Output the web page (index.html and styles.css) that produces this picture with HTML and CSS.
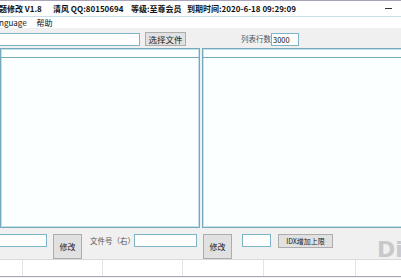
FILE: index.html
```html
<!DOCTYPE html>
<html>
<head>
<meta charset="utf-8">
<link rel="stylesheet" href="styles.css">
</head>
<body>
<div class="win">
  <div class="titlebar">
    <span class="t t1">题修改 V1.8</span>
    <span class="t t2">清风 QQ:80150694</span>
    <span class="t t3">等级:至尊会员</span>
    <span class="t t4">到期时间:2020-6-18 09:29:09</span>
    <span class="minbtn"></span>
  </div>
  <div class="menubar">
    <span class="menu m1">nguage</span>
    <span class="menu m2">帮助</span>
  </div>
  <div class="content">
    <div class="row1">
      <div class="input path"></div>
      <div class="btn choose">选择文件</div>
      <span class="lbl rows">列表行数</span>
      <div class="input num">3000</div>
    </div>
    <div class="lists">
      <div class="list left"><div class="lhead"></div></div>
      <div class="list right"><div class="lhead"></div></div>
    </div>
    <div class="row2">
      <div class="input b1"></div>
      <div class="btn tall edit1">修改</div>
      <span class="lbl fileno">文件号（右）</span>
      <div class="input b2"></div>
      <div class="btn tall edit2">修改</div>
      <div class="input b3"></div>
      <div class="btn idx">IDX增加上限</div>
    </div>
  </div>
  <div class="status">
    <div class="pane p1"></div>
    <div class="pane p2"></div>
    <div class="pane p3"></div>
    <div class="pane p4"></div>
    <div class="pane p5"></div>
    <div class="pane p6"></div>
  </div>
  <div class="wm">Di</div>
</div>
</body>
</html>
```
FILE: styles.css
```css
* { box-sizing: border-box; }
html, body { margin: 0; padding: 0; }
body {
  width: 401px; height: 278px; overflow: hidden;
  background: #f0f0f0;
  font-family: "Noto Sans CJK SC", "Noto Sans", sans-serif;
}
.win { position: relative; width: 401px; height: 278px; overflow: hidden; background: #f0f0f0; }
.titlebar {
  height: 17px; background: #fff;
  border-top: 1px solid #a9a4b9;
  border-bottom: 1px solid #c9dee8;
  display: flex; align-items: center;
  font-size: 8px; font-weight: bold; color: #111;
  white-space: nowrap;
}
.t { line-height: 14px; flex: none; }
.t1 { margin-left: -1px; width: 54px; }
.t2 { width: 78px; }
.t3 { width: 56px; }
.t4 { width: 110px; }
.minbtn { margin-left: auto; margin-right: 9px; width: 7px; height: 1px; background: #333; }
.menubar {
  height: 11px; background: #fff;
  display: flex; align-items: center;
  font-size: 8px; color: #111; white-space: nowrap;
}
.m1 { margin-left: -1px; }
.m2 { margin-left: 10px; }
.content { height: 231px; display: flex; flex-direction: column; }
.row1 { height: 19px; display: flex; align-items: center; padding-top: 3px; white-space: nowrap; }
.input {
  background: #fff; border: 1px solid #7eb4c8; height: 13px;
  font-size: 7.5px; line-height: 11px; color: #111; padding-left: 1px;
  flex: none;
}
.path { margin-left: -10px; width: 150px; }
.btn {
  background: #e1e1e1; border: 1px solid #adadad; height: 14px;
  font-size: 8.5px; line-height: 12px; color: #222; text-align: center; flex: none;
}
.choose { margin-left: 5px; width: 41px; }
.lbl { font-size: 7.5px; color: #555; line-height: 12px; flex: none; }
.rows { margin-left: 55px; width: 30px; }
.num { width: 28px; }
.lists { display: flex; margin-top: 1px; height: 180px; }
.list {
  height: 180px; background: #fbffff;
  border: 1px solid #74aabb;
  box-shadow: inset 0 0 0 1px #c3e2ea;
  flex: none;
}
.left { width: 200px; }
.right { width: 203px; margin-left: 2px; }
.lhead { height: 9px; border-bottom: 1px solid #74aabb; }
.row2 { display: flex; align-items: flex-start; padding-top: 6px; white-space: nowrap; }
.b1 { margin-left: -10px; width: 57px; }
.tall { height: 25px; width: 29px; line-height: 23px; font-size: 8px; }
.edit1 { margin-left: 6px; }
.fileno { margin-left: 8px; width: 44px; line-height: 13px; }
.b2 { width: 63px; }
.edit2 { margin-left: 6px; }
.b3 { margin-left: 10px; width: 29px; }
.idx { margin-left: 7px; width: 55px; font-size: 7px; }
.status {
  height: 18px; background: #fff;
  border-top: 1px solid #d9d9d9;
  border-bottom: 1px solid #a9a4b9;
  display: flex;
}
.pane { height: 100%; border-right: 1px solid #e4e4e4; flex: none; }
.p1 { width: 23px; }
.p2 { width: 80px; }
.p3 { width: 80px; }
.p4 { width: 81px; }
.p5 { width: 92px; }
.p6 { flex: 1; border-right: none; }
.wm {
  position: absolute; left: 377px; top: 238px;
  font-family: "DejaVu Sans", sans-serif; font-weight: bold;
  font-size: 22px; color: #c9c9c9; line-height: 24px;
}
```
